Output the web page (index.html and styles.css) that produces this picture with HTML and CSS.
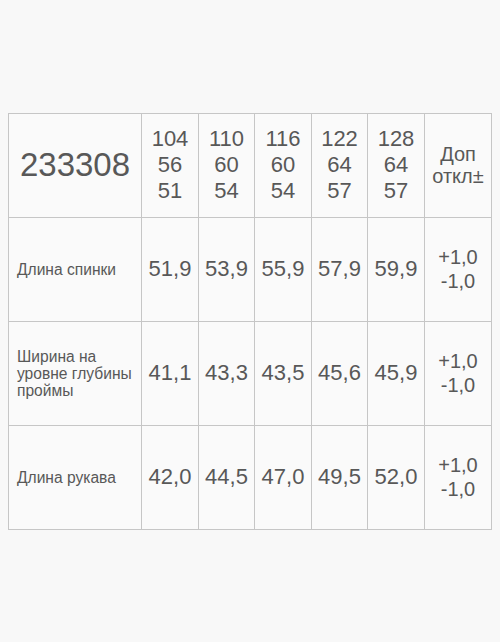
FILE: index.html
```html
<!DOCTYPE html>
<html lang="ru">
<head>
<meta charset="utf-8">
<link rel="stylesheet" href="styles.css">
</head>
<body>
<table class="sizes">
  <colgroup>
    <col class="c-label">
    <col class="c-num"><col class="c-num2"><col class="c-num"><col class="c-num2"><col class="c-num">
    <col class="c-tol">
  </colgroup>
  <tr class="head">
    <td class="article">233308</td>
    <td class="size">104<br>56<br>51</td>
    <td class="size">110<br>60<br>54</td>
    <td class="size">116<br>60<br>54</td>
    <td class="size">122<br>64<br>57</td>
    <td class="size">128<br>64<br>57</td>
    <td class="tol-head">Доп<br>откл±</td>
  </tr>
  <tr>
    <td class="label">Длина спинки</td>
    <td class="val">51,9</td>
    <td class="val">53,9</td>
    <td class="val">55,9</td>
    <td class="val">57,9</td>
    <td class="val">59,9</td>
    <td class="tol">+1,0<br>-1,0</td>
  </tr>
  <tr>
    <td class="label">Ширина на уровне глубины проймы</td>
    <td class="val">41,1</td>
    <td class="val">43,3</td>
    <td class="val">43,5</td>
    <td class="val">45,6</td>
    <td class="val">45,9</td>
    <td class="tol">+1,0<br>-1,0</td>
  </tr>
  <tr>
    <td class="label">Длина рукава</td>
    <td class="val">42,0</td>
    <td class="val">44,5</td>
    <td class="val">47,0</td>
    <td class="val">49,5</td>
    <td class="val">52,0</td>
    <td class="tol">+1,0<br>-1,0</td>
  </tr>
</table>
</body>
</html>
```

FILE: styles.css
```css
html, body {
  margin: 0;
  padding: 0;
  background: #f8f8f8;
}
body {
  height: 642px;
  display: flex;
  align-items: center;
  padding: 0 9px 0 8px;
  box-sizing: border-box;
  font-family: "Liberation Sans", Arial, sans-serif;
  color: #585858;
}
.sizes {
  border-collapse: collapse;
  table-layout: fixed;
  width: 484px;
  background: #fafafa;
}
.c-label { width: 133px; }
.c-num { width: 57px; }
.c-num2 { width: 56px; }
.c-tol { width: 67px; }
.sizes td {
  border: 1px solid #c6c6c6;
  height: 103px;
  padding: 0;
  text-align: center;
  vertical-align: middle;
}
.article {
  font-size: 33px;
}
.size {
  font-size: 22px;
  line-height: 26px;
}
.tol-head {
  font-size: 20px;
  line-height: 22px;
}
.label {
  text-align: left !important;
  padding: 0 4px 0 8px !important;
  font-size: 15.6px;
  line-height: 17px;
}
.val {
  font-size: 22px;
}
.tol {
  font-size: 20px;
  line-height: 24px;
}
```
